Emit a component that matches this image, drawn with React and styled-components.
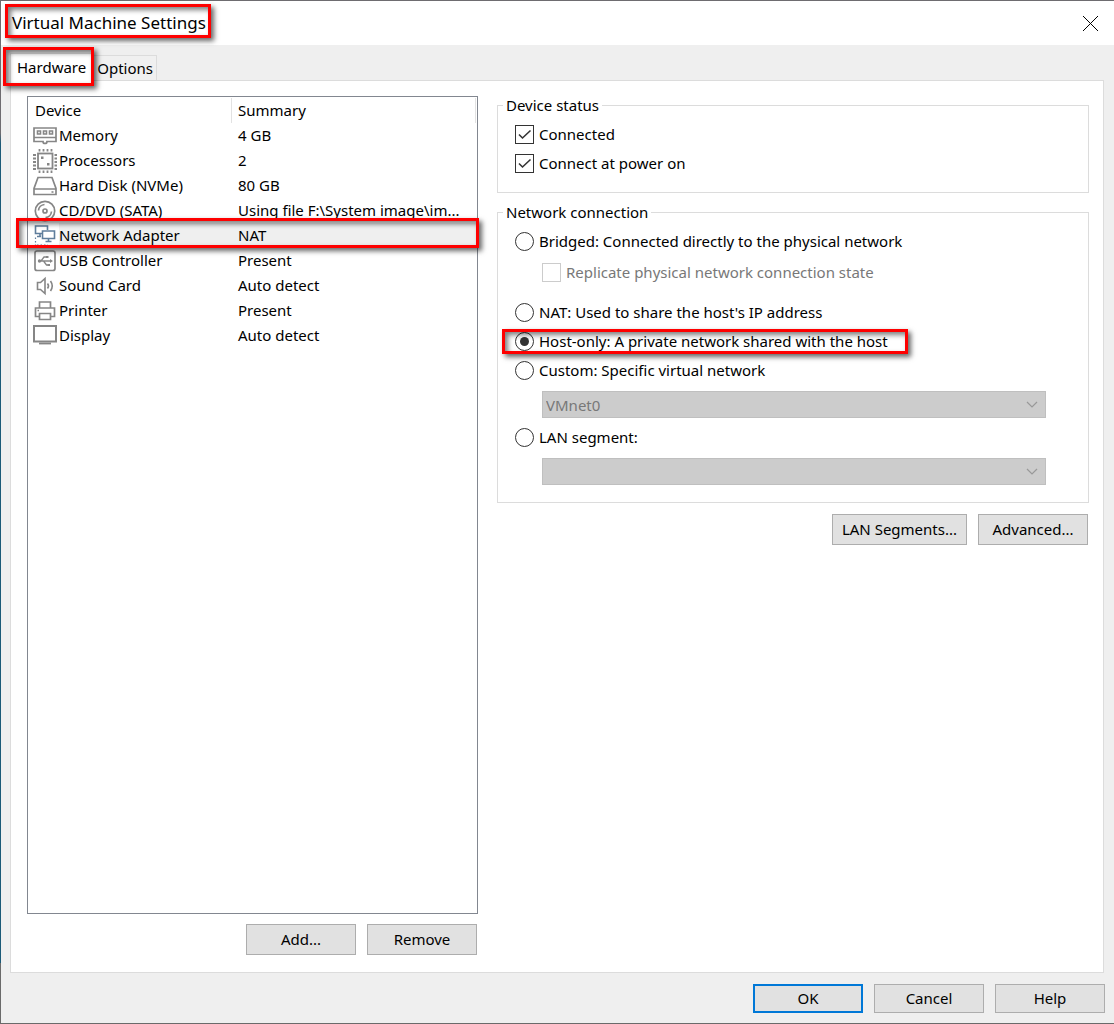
import React from "react";
import styled, { createGlobalStyle } from "styled-components";

const GlobalStyle = createGlobalStyle`
  *, *::before, *::after {
    box-sizing: border-box;
  }
  body {
    margin: 0;
    background: #efefef;
    color: #000;
    font-family: "Noto Sans", "Open Sans", sans-serif;
    font-size: 15px;
    line-height: 24px;
  }
  button, input, select {
    margin: 0;
    font: inherit;
    color: inherit;
  }
`;

const Desktop = styled.div`
  display: flex;
  min-height: 100vh;
  padding: 1px 0 1px 1px;
  background: linear-gradient(#6e6c70 0 13%, #1b5a78 14% 94%, #6a6a6a 94% 100%);
`;

const Dialog = styled.div`
  flex: 1;
  display: flex;
  flex-direction: column;
  background: #efefef;
  box-shadow: 0 -1px #6e6c70, 0 1px #6a6a6a;
`;

const TitleBar = styled.header`
  display: flex;
  align-items: center;
  justify-content: space-between;
  height: 44px;
  padding: 0 8px 0 11px;
  background: #fff;
`;

const Title = styled.h1`
  position: relative;
  margin: 0;
  font-size: 17px;
  font-weight: 400;
  line-height: 24px;
`;

const CloseButton = styled.button`
  display: flex;
  align-items: center;
  justify-content: center;
  width: 31px;
  height: 31px;
  padding: 0;
  border: 0;
  background: none;
`;

/* Red frame drawn over the thing it points at */
const Highlight = styled.span`
  position: absolute;
  z-index: 2;
  inset: ${(props) => props.$inset};
  border: 3px solid #fe0000;
  box-shadow: 3px 3px 5px rgba(0, 0, 0, 0.6),
    inset 3px 3px 5px rgba(0, 0, 0, 0.5);
  pointer-events: none;
`;

const TabList = styled.div`
  display: flex;
  align-items: flex-end;
  height: 35px;
  padding-left: 9px;
`;

const Tab = styled.button`
  position: relative;
  height: ${(props) => (props.$active ? "28px" : "25px")};
  margin-bottom: ${(props) => (props.$active ? "-1px" : "0")};
  padding: ${(props) => (props.$active ? "0 6px 2px" : "0 3px")};
  border: 1px solid #dcdcdc;
  border-bottom: 0;
  background: ${(props) => (props.$active ? "#fff" : "#f0f0f0")};
  line-height: 24px;
  z-index: ${(props) => (props.$active ? 1 : 0)};
`;

const Panel = styled.main`
  flex: 1;
  display: grid;
  grid-template-columns: minmax(0, 451fr) minmax(0, 592fr);
  gap: 19px;
  margin: 0 10px 0 9px;
  padding: 12px 14px 17px 16px;
  border: 1px solid #dcdcdc;
  background: #fff;
`;

const DeviceColumn = styled.section`
  display: flex;
  flex-direction: column;
  padding-top: 3px;
`;

const DeviceList = styled.div`
  flex: 1;
  padding-top: 1px;
  border: 1px solid #828790;
`;

const DeviceTable = styled.table`
  width: 100%;
  table-layout: fixed;
  border-collapse: separate;
  border-spacing: 0;
`;

const HeadCell = styled.th`
  width: ${(props) => props.$width || "auto"};
  height: 25px;
  padding: 0 7px 1px ${(props) => (props.$width ? "7px" : "5px")};
  text-align: left;
  font-weight: 400;
  background: linear-gradient(#e2e2e2, #e2e2e2) right 1px top / 1px 25px no-repeat;
`;

const DeviceRow = styled.tr`
  position: relative;
`;

const NameCell = styled.td`
  height: 25px;
  padding: 0 0 0 5px;
`;

const DeviceName = styled.div`
  display: flex;
  align-items: center;
  height: 25px;
  svg {
    flex: none;
    margin-right: 2px;
  }
`;

const DeviceLabel = styled.span`
  flex: 1;
  height: 25px;
  background: ${(props) => (props.$selected ? "#efefef" : "transparent")};
`;

const SummaryCell = styled.td`
  height: 25px;
  padding: 0 7px 1px 5px;
  overflow: hidden;
  white-space: nowrap;
  text-overflow: ellipsis;
  background: ${(props) => (props.$selected ? "#efefef" : "transparent")};
`;

const ButtonRow = styled.div`
  display: flex;
  justify-content: flex-end;
  gap: 11px;
  padding: ${(props) => props.$pad || "0"};
`;

const PushButton = styled.button`
  min-width: 110px;
  height: ${(props) => (props.$short ? "29px" : "31px")};
  padding: 0 9px 2px;
  border: ${(props) => (props.$primary ? "2px solid #0078d7" : "1px solid #adadad")};
  background: #e1e1e1;
  line-height: 24px;
  white-space: nowrap;
`;

const OptionsColumn = styled.section`
  min-width: 0;
`;

const Group = styled.fieldset`
  min-width: 0;
  margin: 0 0 7px;
  padding: 3px 42px ${(props) => props.$bottom} 5px;
  border: 1px solid #dcdcdc;
`;

const GroupTitle = styled.legend`
  padding: 0 3px;
`;

const OptionRow = styled.div`
  position: relative;
  display: flex;
  align-items: center;
  gap: 5px;
  width: fit-content;
  height: 29px;
  margin: ${(props) => (props.$nested ? "2px 0 11px 39px" : "0 0 0 12px")};
  color: ${(props) => (props.$nested ? "#787878" : "#000")};
  label {
    padding-bottom: 1px;
  }
`;

const TickWrap = styled.span`
  position: relative;
  display: flex;
  svg {
    position: absolute;
    inset: 0;
    pointer-events: none;
  }
`;

const TickBox = styled.input`
  appearance: none;
  width: 19px;
  height: 19px;
  border: 1px solid #333;
  background: #fff;
  & + svg {
    display: none;
  }
  &:checked + svg {
    display: block;
  }
  &:disabled {
    border-color: #ccc;
  }
`;

const Radio = styled.input`
  appearance: none;
  display: grid;
  place-items: center;
  width: 19px;
  height: 19px;
  border: 1px solid #333;
  border-radius: 50%;
  background: #fff;
  &:checked::before {
    content: "";
    width: 9px;
    height: 9px;
    border-radius: 50%;
    background: #333;
  }
`;

const SelectWrap = styled.div`
  position: relative;
  margin: 6px 0 5px 39px;
  svg {
    position: absolute;
    right: 8px;
    top: 10px;
    pointer-events: none;
  }
`;

const SelectBox = styled.select`
  appearance: none;
  display: block;
  width: 100%;
  height: 27px;
  padding: 0 24px 0 3px;
  border: 1px solid #bfbfbf;
  border-radius: 0;
  background: #ccc;
  color: #787878;
  &:disabled {
    opacity: 1;
  }
`;

const Icon = ({ children, color = "#868686" }) => (
  <svg width="24" height="24" viewBox="0 0 24 24" fill="none" stroke={color} aria-hidden="true">
    {children}
  </svg>
);

const MemoryIcon = () => (
  <Icon>
    <path d="M1 4h22v13.500h-9a2 2 0 0 1-4 0H1z" strokeWidth="1.700" />
    <path d="M4.500 7h3v3h-3zM10.500 7h3v3h-3zM16.500 7h3v3h-3z" strokeWidth="1.600" />
    <path d="M1 13.500h22" strokeWidth="1.500" />
  </Icon>
);

const ProcessorIcon = () => (
  <Icon>
    <rect x="5" y="4.500" width="14.500" height="15" strokeWidth="1.800" />
    <path
      d="M6.500 0v2.500M10.500 0v2.500M14.500 0v2.500M18.500 0v2.500M6.500 21.500V24M10.500 21.500V24M14.500 21.500V24M18.500 21.500V24M0 6h3M0 9.500h3M0 13h3M0 16.500h3M0 20h3M21.500 6h2.500M21.500 9.500h2.500M21.500 13h2.500M21.500 16.500h2.500M21.500 20h2.500"
      strokeWidth="1.800"
    />
    <path d="M8 7.500h2.500V10H8zM14 14h2.500v2.500H14z" fill="#868686" stroke="none" />
  </Icon>
);

const DiskIcon = () => (
  <Icon>
    <path d="M5 3.500h14l4 11v6H1v-6zM1 15h22" strokeWidth="1.700" />
    <path d="M18.500 18h2" strokeWidth="1.600" />
  </Icon>
);

const DiscIcon = () => (
  <Icon>
    <circle cx="12" cy="12" r="9.700" strokeWidth="1.700" />
    <circle cx="12" cy="12" r="2" strokeWidth="1.700" />
    <path d="M5.500 11.500a6.500 6.500 0 0 1 6-6M18.500 12.500a6.500 6.500 0 0 1-6 6" strokeWidth="1.700" />
  </Icon>
);

const NetworkIcon = () => (
  <Icon color="#5f7e9c">
    <path d="M9 9.500H2.500V2h12v4" strokeWidth="1.600" />
    <path d="M9.500 7h12v7.500h-12zM15.500 14.500v3M12.500 17.500h6M7 9.500v3M4 12.500h4" strokeWidth="1.600" />
    <path d="M2.500 13.500v8M4 21h11" strokeWidth="1.200" strokeDasharray="1.500 2" />
  </Icon>
);

const UsbIcon = () => (
  <Icon>
    <rect x="2" y="2" width="20" height="19.500" rx="2" strokeWidth="1.700" />
    <path d="M6 12h12M8 12l3-4h2.500M10.500 12l3 4h2" strokeWidth="1.300" />
    <path d="M17 10l3 2-3 2z" fill="#868686" stroke="none" />
    <circle cx="6.500" cy="12" r="1.700" fill="#868686" stroke="none" />
    <path d="M13 7h2.500v2H13zM14.500 15H17v2h-2.500z" fill="#868686" stroke="none" />
  </Icon>
);

const SoundIcon = () => (
  <Icon>
    <path d="M4.500 8.500h3l4.500-4v15l-4.500-4h-3z" strokeWidth="1.600" />
    <path d="M14.500 9.500q2 2.500 0 5M17.500 7q3.500 5 0 10" strokeWidth="1.600" />
  </Icon>
);

const PrinterIcon = () => (
  <Icon>
    <path d="M6.500 9V3h11v6M6.500 17.500h-4V9h19v8.500h-4" strokeWidth="1.700" />
    <path d="M6.500 14.500h11v6h-11zM4.500 11.500h1.500" strokeWidth="1.700" />
  </Icon>
);

const DisplayIcon = () => (
  <Icon>
    <rect x="1" y="2" width="22" height="15.500" strokeWidth="2" />
    <path d="M6 19.500h12" strokeWidth="1.800" />
  </Icon>
);

const ChevronIcon = () => (
  <svg width="12" height="7" viewBox="0 0 12 7" fill="none" stroke="#999" aria-hidden="true">
    <path d="M1 1l5 5 5-5" strokeWidth="1.200" />
  </svg>
);

const TickIcon = () => (
  <svg width="19" height="19" viewBox="0 0 19 19" fill="none" stroke="#333" aria-hidden="true">
    <path d="M4 9.500l3.500 3.500L15.500 5.500" strokeWidth="1.600" />
  </svg>
);

const devices = [
  { name: "Memory", summary: "4 GB", icon: <MemoryIcon /> },
  { name: "Processors", summary: "2", icon: <ProcessorIcon /> },
  { name: "Hard Disk (NVMe)", summary: "80 GB", icon: <DiskIcon /> },
  { name: "CD/DVD (SATA)", summary: "Using file F:\\System image\\im...", icon: <DiscIcon /> },
  { name: "Network Adapter", summary: "NAT", icon: <NetworkIcon />, selected: true },
  { name: "USB Controller", summary: "Present", icon: <UsbIcon /> },
  { name: "Sound Card", summary: "Auto detect", icon: <SoundIcon /> },
  { name: "Printer", summary: "Present", icon: <PrinterIcon /> },
  { name: "Display", summary: "Auto detect", icon: <DisplayIcon /> },
];

function CheckOption({ id, label, nested, ...rest }) {
  return (
    <OptionRow $nested={nested}>
      <TickWrap>
        <TickBox type="checkbox" id={id} {...rest} />
        <TickIcon />
      </TickWrap>
      <label htmlFor={id}>{label}</label>
    </OptionRow>
  );
}

function RadioOption({ id, label, highlighted, ...rest }) {
  return (
    <OptionRow>
      <Radio type="radio" name="connection" id={id} {...rest} />
      <label htmlFor={id}>{label}</label>
      {highlighted && <Highlight $inset="2px -20px 2px -13px" />}
    </OptionRow>
  );
}

function DisabledSelect({ label, value }) {
  return (
    <SelectWrap>
      <SelectBox disabled aria-label={label}>
        <option>{value}</option>
      </SelectBox>
      <ChevronIcon />
    </SelectWrap>
  );
}

function Devices() {
  return (
    <DeviceColumn>
      <DeviceList>
        <DeviceTable>
          <thead>
            <tr>
              <HeadCell $width="205px">Device</HeadCell>
              <HeadCell>Summary</HeadCell>
            </tr>
          </thead>
          <tbody>
            {devices.map(({ name, summary, icon, selected }) => (
              <DeviceRow key={name}>
                <NameCell>
                  <DeviceName>
                    {icon}
                    <DeviceLabel $selected={selected}>{name}</DeviceLabel>
                  </DeviceName>
                  {selected && <Highlight $inset="-5px -2px 0 -12px" />}
                </NameCell>
                <SummaryCell $selected={selected}>{summary}</SummaryCell>
              </DeviceRow>
            ))}
          </tbody>
        </DeviceTable>
      </DeviceList>
      <ButtonRow $pad="10px 1px 0 0">
        <PushButton type="button">Add...</PushButton>
        <PushButton type="button">Remove</PushButton>
      </ButtonRow>
    </DeviceColumn>
  );
}

function AdapterOptions() {
  return (
    <OptionsColumn>
      <Group $bottom="14px">
        <GroupTitle>Device status</GroupTitle>
        <CheckOption id="connected" label="Connected" defaultChecked />
        <CheckOption id="powerOn" label="Connect at power on" defaultChecked />
      </Group>
      <Group $bottom="12px">
        <GroupTitle>Network connection</GroupTitle>
        <RadioOption id="bridged" label="Bridged: Connected directly to the physical network" />
        <CheckOption id="replicate" label="Replicate physical network connection state" nested disabled />
        <RadioOption id="nat" label="NAT: Used to share the host's IP address" />
        <RadioOption
          id="hostOnly"
          label="Host-only: A private network shared with the host"
          defaultChecked
          highlighted
        />
        <RadioOption id="custom" label="Custom: Specific virtual network" />
        <DisabledSelect label="Virtual network" value="VMnet0" />
        <RadioOption id="lan" label="LAN segment:" />
        <DisabledSelect label="LAN segment name" value="" />
      </Group>
      <ButtonRow $pad="4px 1px 0 0">
        <PushButton type="button">LAN Segments...</PushButton>
        <PushButton type="button">Advanced...</PushButton>
      </ButtonRow>
    </OptionsColumn>
  );
}

function App() {
  return (
    <Desktop>
      <GlobalStyle />
      <Dialog>
        <TitleBar>
          <Title>
            Virtual Machine Settings
            <Highlight $inset="-7px -5px -3px -7px" />
          </Title>
          <CloseButton type="button" aria-label="Close">
            <svg width="17" height="17" viewBox="0 0 17 17" stroke="#000" aria-hidden="true">
              <path d="M1 1l15 15M16 1L1 16" />
            </svg>
          </CloseButton>
        </TitleBar>
        <TabList role="tablist">
          <Tab type="button" role="tab" aria-selected="true" $active>
            Hardware
            <Highlight $inset="-7px -2px -5px -8px" />
          </Tab>
          <Tab type="button" role="tab" aria-selected="false">
            Options
          </Tab>
        </TabList>
        <Panel>
          <Devices />
          <AdapterOptions />
        </Panel>
        <ButtonRow $pad="11px 9px 10px">
          <PushButton type="button" $short $primary>OK</PushButton>
          <PushButton type="button" $short>Cancel</PushButton>
          <PushButton type="button" $short>Help</PushButton>
        </ButtonRow>
      </Dialog>
    </Desktop>
  );
}

export default App;
